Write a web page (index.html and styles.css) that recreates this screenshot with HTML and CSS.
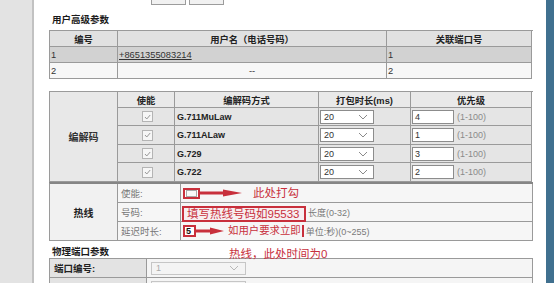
FILE: index.html
```html
<!DOCTYPE html>
<html lang="zh-CN">
<head>
<meta charset="utf-8">
<title>用户高级参数</title>
<link rel="stylesheet" href="styles.css">
</head>
<body>
<div class="page">
  <aside class="side"></aside>
  <main class="main">
    <div class="btns"><span class="btn"></span><span class="btn"></span></div>

    <h3 class="sec">用户高级参数</h3>
    <div class="grid t1">
      <div class="c hd center">编号</div>
      <div class="c hd center">用户名（电话号码）</div>
      <div class="c hd center">关联端口号</div>

      <div class="c r1">1</div>
      <div class="c r1"><span class="link">+8651355083214</span></div>
      <div class="c r1">1</div>

      <div class="c r2">2</div>
      <div class="c r2 center">--</div>
      <div class="c r2">2</div>
    </div>

    <div class="grid codec">
      <div class="c lab codec-lab">编解码</div>
      <div class="c hd2 center">使能</div>
      <div class="c hd2 center">编解码方式</div>
      <div class="c hd2 center">打包时长(ms)</div>
      <div class="c hd2 center">优先级</div>

      <div class="c cr center"><span class="cb"><svg viewBox="0 0 10 10" width="10" height="10"><polyline points="2.2,5 4.2,7.2 8,2.8" fill="none" stroke="#8a8a8a" stroke-width="1"/></svg></span></div>
      <div class="c cr name">G.711MuLaw</div>
      <div class="c cr"><span class="sel">20<svg class="chev" viewBox="0 0 10 6" width="10" height="6"><polyline points="1,1 5,5 9,1" fill="none" stroke="#8a8a8a" stroke-width="1"/></svg></span></div>
      <div class="c cr"><span class="inp">4</span><span class="hint">(1-100)</span></div>

      <div class="c cr center"><span class="cb"><svg viewBox="0 0 10 10" width="10" height="10"><polyline points="2.2,5 4.2,7.2 8,2.8" fill="none" stroke="#8a8a8a" stroke-width="1"/></svg></span></div>
      <div class="c cr name">G.711ALaw</div>
      <div class="c cr"><span class="sel">20<svg class="chev" viewBox="0 0 10 6" width="10" height="6"><polyline points="1,1 5,5 9,1" fill="none" stroke="#8a8a8a" stroke-width="1"/></svg></span></div>
      <div class="c cr"><span class="inp">1</span><span class="hint">(1-100)</span></div>

      <div class="c cr center"><span class="cb"><svg viewBox="0 0 10 10" width="10" height="10"><polyline points="2.2,5 4.2,7.2 8,2.8" fill="none" stroke="#8a8a8a" stroke-width="1"/></svg></span></div>
      <div class="c cr name">G.729</div>
      <div class="c cr"><span class="sel">20<svg class="chev" viewBox="0 0 10 6" width="10" height="6"><polyline points="1,1 5,5 9,1" fill="none" stroke="#8a8a8a" stroke-width="1"/></svg></span></div>
      <div class="c cr"><span class="inp">3</span><span class="hint">(1-100)</span></div>

      <div class="c cr center"><span class="cb"><svg viewBox="0 0 10 10" width="10" height="10"><polyline points="2.2,5 4.2,7.2 8,2.8" fill="none" stroke="#8a8a8a" stroke-width="1"/></svg></span></div>
      <div class="c cr name">G.722</div>
      <div class="c cr"><span class="sel">20<svg class="chev" viewBox="0 0 10 6" width="10" height="6"><polyline points="1,1 5,5 9,1" fill="none" stroke="#8a8a8a" stroke-width="1"/></svg></span></div>
      <div class="c cr"><span class="inp">2</span><span class="hint">(1-100)</span></div>
    </div>

    <div class="grid hot">
      <div class="c lab hot-lab">热线</div>
      <div class="c hr sub">使能:</div>
      <div class="c hr val">
        <span class="rbox rcheck"><span class="cbin"></span></span>
        <svg class="arrow" viewBox="0 0 42 10" width="42" height="10"><rect x="0" y="3.5" width="26" height="3" fill="#c8303c"/><polygon points="23,1.5 42,5 23,8.5" fill="#c8303c"/></svg>
        <span class="rtext t-check">此处打勾</span>
      </div>

      <div class="c hr sub">号码:</div>
      <div class="c hr val">
        <span class="rbox rnum"><span class="rtext">填写热线号码如95533</span></span>
        <span class="ghint">长度(0-32)</span>
      </div>

      <div class="c hr sub">延迟时长:</div>
      <div class="c hr val">
        <span class="rbox rdelay">5</span>
        <svg class="arrow2" viewBox="0 0 28 10" width="28" height="10"><rect x="0" y="3.5" width="17" height="3" fill="#c8303c"/><polygon points="14,1.5 28,5 14,8.5" fill="#c8303c"/></svg>
        <span class="rtext t-delay">如用户要求立即</span>
        <span class="ghint">单位:秒)(0~255)</span>
      </div>
    </div>

    <h3 class="sec sec2">物理端口参数</h3>
    <div class="grid port">
      <div class="c plab">端口编号:</div>
      <div class="c pval"><span class="dsel">1<svg class="chev" viewBox="0 0 10 6" width="10" height="6"><polyline points="1,1 5,5 9,1" fill="none" stroke="#b8b8b8" stroke-width="1"/></svg></span></div>
      <div class="c plab"></div>
      <div class="c pval"><span class="dsel"></span></div>
    </div>
  </main>
  <div class="edge"></div>
  <div class="note">热线，此处时间为0</div>
</div>
</body>
</html>
```

FILE: styles.css
```css
* {
  box-sizing: border-box;
  margin: 0;
  padding: 0;
}

body {
  margin: 0;
  background: #fff;
  color: #222;
  font-family: "Liberation Sans", "Noto Sans CJK SC", sans-serif;
  font-size: 9.3px;
}

.page {
  position: relative;
  display: flex;
  width: 554px;
  height: 283px;
  overflow: hidden;
}

.side {
  flex: none;
  width: 34px;
  background: #e3e3e3;
  border-right: 2px solid #c2c2c2;
}

.main {
  flex: 1;
  padding: 0 13px 0 15px;
}

.edge {
  flex: none;
  width: 9px;
  background: #40708f;
}

/* top buttons (cut off) */
.btns {
  display: flex;
  gap: 3px;
  height: 16px;
  margin: -11px 0 0 102px;
}

.btn {
  width: 35px;
  height: 16px;
  border: 1px solid #9c9c9c;
  background: #f1f1f1;
}

.sec {
  margin-top: 9px;
  padding-left: 3px;
  font-size: 9.5px;
  font-weight: bold;
  line-height: 12px;
  color: #1a1a1a;
}

.sec2 {
  margin-top: 5px;
}

/* generic grid table */
.grid {
  display: grid;
  border-top: 1px solid #9a9a9a;
  border-left: 1px solid #9a9a9a;
}

.c {
  display: flex;
  align-items: center;
  padding-left: 1px;
  border-right: 1px solid #9a9a9a;
  border-bottom: 1px solid #9a9a9a;
  white-space: nowrap;
}

.center {
  justify-content: center;
  padding-left: 0;
}

/* table 1 */
.t1 {
  margin-top: 4px;
  grid-template-columns: 68px 269px 145px;
  grid-auto-rows: 16px;
}

.hd {
  background: #e1e1e1;
  font-weight: bold;
}

.r1 {
  background: #d2d2d2;
  color: #333;
}

.r2 {
  background: #f7f7f7;
  color: #333;
}

.link {
  text-decoration: underline;
}

/* codec table */
.codec {
  margin-top: 12px;
  grid-template-columns: 68px 57px 144px 92px 121px;
  grid-template-rows: 16px 18px 19px 18px 19px;
}

.lab {
  justify-content: center;
  padding-left: 0;
  font-size: 10px;
}

.codec-lab {
  grid-row: 1 / 6;
  background: #e8e8e8;
  font-weight: 600;
  color: #333;
}

.hd2 {
  background: #e9e9e9;
  font-weight: bold;
}

.cr {
  background: #e5e5e5;
}

.name {
  padding-left: 2px;
  font-weight: bold;
  font-size: 9px;
}

.cb {
  display: flex;
  width: 11px;
  height: 11px;
  margin-left: 3px;
  border: 1px solid #b4b4b4;
  background: #f6f6f6;
  align-items: center;
  justify-content: center;
}

.sel {
  display: flex;
  align-items: center;
  justify-content: space-between;
  width: 54px;
  height: 14px;
  padding: 0 5px 0 3px;
  border: 1px solid #8c8c8c;
  background: #fff;
  color: #333;
  font-size: 9px;
}

.chev {
  display: block;
}

.inp {
  display: flex;
  align-items: center;
  width: 42px;
  height: 14px;
  padding-left: 2px;
  border: 1px solid #8c8c8c;
  background: #fff;
  color: #333;
  font-size: 9px;
}

.hint {
  margin-left: 3px;
  color: #8a8a8a;
  font-size: 9px;
}

/* hotline table */
.hot {
  border-top: 2px solid #858585;
  grid-template-columns: 68px 63px 352px;
  grid-auto-rows: 19px;
}

.hot-lab {
  grid-row: 1 / 4;
  background: #f1f1f1;
  font-weight: bold;
}

.hr {
  background: #f6f6f6;
}

.sub {
  padding-left: 3px;
  color: #777;
  font-size: 9.5px;
}

.val {
  padding-left: 0;
  overflow: visible;
}

.rbox {
  display: flex;
  align-items: center;
  flex: none;
  border: 2px solid #c8303c;
  background: #fff;
}

.rcheck {
  width: 17px;
  height: 11px;
  margin-left: 2px;
  padding: 1px;
}

.cbin {
  width: 11px;
  height: 7px;
  border: 1px solid #aaa;
  background: #fafafa;
}

.arrow {
  flex: none;
  display: block;
}

.rtext {
  color: #c8303c;
  font-size: 11.5px;
  line-height: 12px;
}

.t-check {
  margin-left: 11px;
}

.rnum {
  align-self: flex-start;
  width: 124px;
  height: 16px;
  margin: 3px 0 0 1px;
  padding-left: 3px;
  background: #f7eef0;
}

.ghint {
  margin-left: 2px;
  color: #7a7a7a;
  font-size: 9px;
}

.rdelay {
  width: 13px;
  height: 12px;
  margin-left: 2px;
  padding-left: 1px;
  color: #111;
  font-weight: bold;
  font-size: 9px;
  line-height: 8px;
}

.arrow2 {
  flex: none;
  display: block;
}

.t-delay {
  margin-left: 4px;
  padding-right: 1px;
  border-right: 2px solid #c8303c;
  font-size: 10.4px;
}

/* physical port table */
.port {
  grid-template-columns: 97px 386px;
  grid-auto-rows: 19px;
}

.plab {
  padding-left: 4px;
  background: #e3e3e3;
  font-weight: bold;
  font-size: 9.5px;
}

.pval {
  padding-left: 4px;
  background: #f5f5f5;
}

.dsel {
  display: flex;
  align-items: center;
  justify-content: space-between;
  width: 95px;
  height: 13px;
  padding: 0 6px 0 4px;
  border: 1px solid #c6c6c6;
  background: #f4f4f4;
  color: #aaa;
  font-size: 9px;
}

/* annotation overlay */
.note {
  position: absolute;
  left: 229px;
  top: 247px;
  color: #c8303c;
  font-size: 11.5px;
  line-height: 14px;
  white-space: nowrap;
}
```
